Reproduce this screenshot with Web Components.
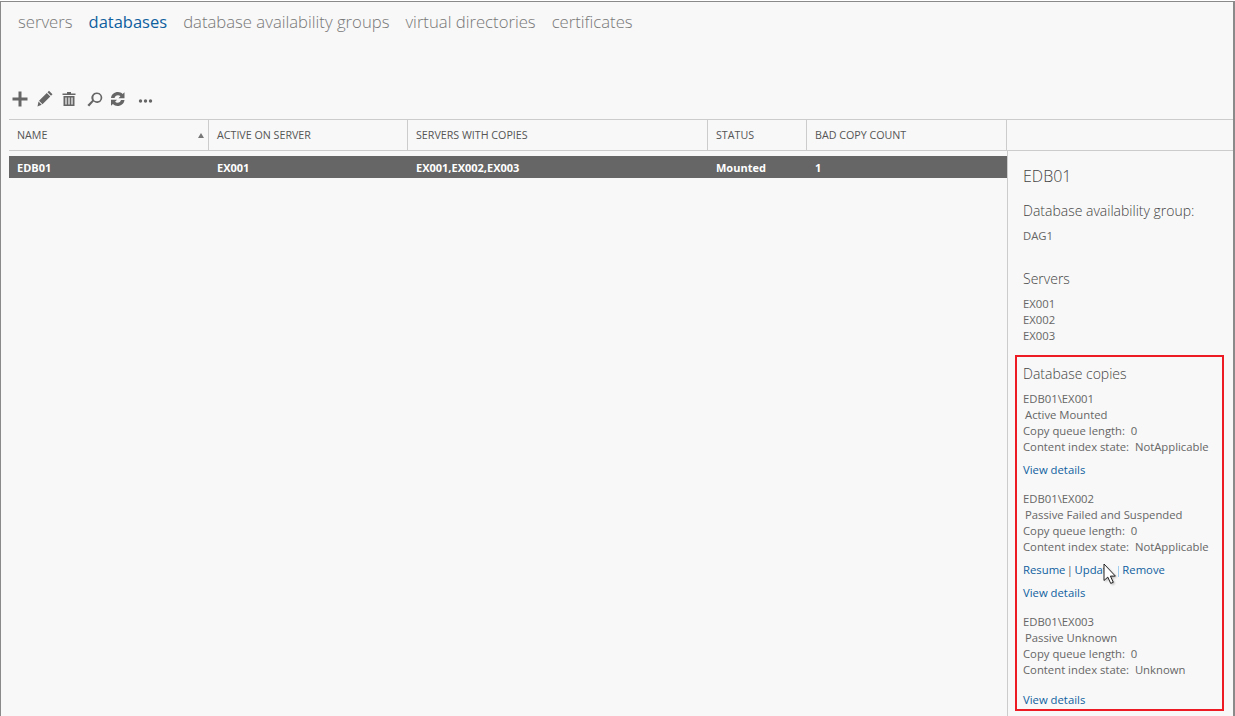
<!DOCTYPE html>
<html>
<head>
<meta charset="utf-8">
<title>databases</title>
<style>
  html, body { margin: 0; height: 100%; overflow: hidden; background: #fff; }
  body { font-family: "Open Sans", "Noto Sans", sans-serif; color: #666; }
</style>
</head>
<body>
<ex-app>
  <ex-tabs slot="tabs" active="databases"></ex-tabs>
  <ex-toolbar slot="toolbar"></ex-toolbar>
  <ex-grid slot="grid"></ex-grid>
  <ex-details slot="details">
    <ex-copy name="EDB01\EX001" state="Active Mounted" index="NotApplicable"></ex-copy>
    <ex-copy name="EDB01\EX002" state="Passive Failed and Suspended" index="NotApplicable" actions></ex-copy>
    <ex-copy name="EDB01\EX003" state="Passive Unknown" index="Unknown" spaced></ex-copy>
  </ex-details>
</ex-app>
<script>
class ExApp extends HTMLElement {
  constructor() {
    super();
    this.attachShadow( {mode: 'open'} ).innerHTML = `
      <style>
        :host {
          box-sizing: border-box;
          display: flex;
          flex-direction: column;
          position: relative;
          width: 1235px;
          height: 715px;
          overflow: hidden;
          border-top: 1px solid #8a8a8a;
          border-left: 1px solid #8a8a8a;
          border-right: 2px solid #8a8a8a;
          margin-top: 1px;
          background: #f8f8f8;
        }
        svg {
          position: absolute;
          left: 1102px;
          top: 561px;
        }
      </style>
      <slot name="tabs"></slot>
      <slot name="toolbar"></slot>
      <slot name="grid"></slot>
      <slot name="details"></slot>
      <svg width="18" height="26" viewBox="0 0 18 26">
        <defs><filter id="soft" x="-30%" y="-30%" width="160%" height="160%"><feGaussianBlur stdDeviation="1"/></filter></defs>
        <rect x="2" y="2" width="13" height="12" fill="#f8f8f8"/>
        <path d="M2.500 2.500v16.500l3.800-3.400 2.900 6.300 2.600-1.100-2.900-6.200h5z" fill="#000" opacity=".3" filter="url(#soft)"/>
        <path d="M1 1v16.500l3.800-3.400 2.900 6.300 2.600-1.100-2.900-6.200h5z" fill="#fff" stroke="#222" stroke-width="1"/>
      </svg>
    `;
  }
}

class ExTabs extends HTMLElement {
  constructor() {
    super();
    const active = this.getAttribute( 'active' );
    const tabs = ['servers', 'databases', 'database availability groups', 'virtual directories', 'certificates'];
    this.attachShadow( {mode: 'open'} ).innerHTML = `
      <style>
        :host {
          display: flex;
          gap: 16px;
          height: 39px;
          padding: 8px 0 0 17px;
          box-sizing: border-box;
          font-size: 16.700px;
          font-weight: 300;
          line-height: 24px;
          color: #777;
        }
        .active { color: #0f5f9f; font-weight: 400; font-size: 16.500px; }
      </style>
      ${tabs.map( tab => `<span class="${tab === active ? 'active' : ''}">${tab}</span>` ).join( '' )}
    `;
  }
}

class ExToolbar extends HTMLElement {
  constructor() {
    super();
    this.attachShadow( {mode: 'open'} ).innerHTML = `
      <style>
        :host {
          display: flex;
          align-items: center;
          height: 78px;
          padding: 37px 0 0 10px;
          box-sizing: border-box;
        }
        svg { display: block; fill: #666; flex: none; }
      </style>
      <svg width="18" height="18" viewBox="0 0 18 18"><path d="M7.500 1.500h3v6h6v3h-6v6h-3v-6h-6v-3h6z"/></svg>
      <svg style="margin-left:8px" width="16" height="18" viewBox="0 0 16 18"><path d="M12 .8l3.500 3.500-1.500 1.500-3.500-3.500zM9.800 3l3.500 3.500-7.800 7.800-3.500-3.500zM1.500 11.600l3.200 3.200-4.200 1.700z"/></svg>
      <svg style="margin-left:9px" width="14" height="18" viewBox="0 0 14 18"><path d="M5 2h4v1.500h4.500v1.500h-13v-1.500h4.500zM1.500 6h11v10h-11zM3.400 7.500v7h1.200v-7zM6.400 7.500v7h1.200v-7zM9.400 7.500v7h1.200v-7z" fill-rule="evenodd"/></svg>
      <svg style="margin-left:11px" width="16" height="18" viewBox="0 0 16 18"><path d="M10 2.500a5.200 5.200 0 1 1-3.400 9.100l-4.400 4.900-1.800-1.600 4.700-4.600a5.200 5.200 0 0 1 4.900-7.800zm0 1.600a3.600 3.600 0 1 0 0 7.200 3.600 3.600 0 0 0 0-7.200z"/></svg>
      <svg style="margin-left:7px" width="16" height="18" viewBox="0 0 16 18"><path d="M8 2c1.800 0 3.400.7 4.600 1.900l1.900-1.700v6h-6l1.900-1.900c-.6-.7-1.500-1.100-2.400-1.100-1.800 0-3.100 1.200-3.500 2.800h-3.500c.3-3.500 3.300-6 7-6zM1 9.800h6l-1.900 1.900c.6.7 1.500 1.100 2.400 1.100 1.800 0 3.200-1.200 3.500-2.800h3.500c-.4 3.500-3.300 6-7 6-1.800 0-3.400-.7-4.600-1.900l-1.900 1.700z"/></svg>
      <svg style="margin-left:12px" width="15" height="18" viewBox="0 0 15 18"><circle cx="2.500" cy="11" r="1.700"/><circle cx="7.500" cy="11" r="1.700"/><circle cx="12.500" cy="11" r="1.700"/></svg>
    `;
  }
}

class ExGrid extends HTMLElement {
  constructor() {
    super();
    this.attachShadow( {mode: 'open'} ).innerHTML = `
      <style>
        :host {
          display: grid;
          grid-template-columns: 200px 199px 300px 99px 200px 1fr;
          margin-left: 8px;
          height: 32px;
          box-sizing: border-box;
          border-top: 1px solid #ccc;
          border-bottom: 1px solid #ccc;
          font-size: 10.700px;
          line-height: 30px;
          color: #555;
        }
        div {
          position: relative;
          padding-left: 8px;
          border-right: 1px solid #ccc;
        }
        div:last-child { border-right: 0; }
        i {
          position: absolute;
          right: 4px;
          top: 13px;
          border: 3.500px solid transparent;
          border-top: 0;
          border-bottom: 5px solid #777;
        }
      </style>
      <div>NAME<i></i></div>
      <div>ACTIVE ON SERVER</div>
      <div>SERVERS WITH COPIES</div>
      <div>STATUS</div>
      <div>BAD COPY COUNT</div>
      <div></div>
    `;
  }
}

class ExDetails extends HTMLElement {
  constructor() {
    super();
    this.attachShadow( {mode: 'open'} ).innerHTML = `
      <style>
        :host {
          display: grid;
          grid-template-columns: 998px 226px;
          margin-left: 8px;
          flex: 1;
          min-height: 0;
          font-size: 11.300px;
          line-height: 16px;
          color: #666;
        }
        .list { padding-top: 5px; }
        .row {
          display: grid;
          grid-template-columns: 200px 199px 300px 99px 200px;
          height: 22px;
          background: #666;
          color: #fff;
          font-size: 11px;
          font-weight: 700;
          line-height: 23px;
        }
        .row span { padding-left: 8px; }
        aside {
          border-left: 1px solid #ccc;
          padding: 14px 0 0 7px;
        }
        .pad { padding-left: 8px; }
        h2, h3 { margin: 0; font-weight: 300; color: #444; }
        h2 { font-size: 16px; line-height: 22px; }
        h3 { font-size: 14px; line-height: 20px; }
        .group { margin-top: 14px; }
        .value { margin-top: 7px; }
        .servers { margin-top: 25px; }
        .servers div { margin-top: 7px; }
        section {
          box-sizing: border-box;
          width: 209px;
          height: 356px;
          margin-top: 11px;
          padding: 7px 0 0 6px;
          border: 2px solid #ed1c24;
        }
        h3.copies { margin-bottom: 7px; }
      </style>
      <div class="list">
        <div class="row">
          <span>EDB01</span><span>EX001</span><span>EX001,EX002,EX003</span><span>Mounted</span><span>1</span>
        </div>
      </div>
      <aside>
        <div class="pad">
          <h2>EDB01</h2>
          <h3 class="group">Database availability group:</h3>
          <div class="value">DAG1</div>
          <div class="servers">
            <h3>Servers</h3>
            <div>EX001<br>EX002<br>EX003</div>
          </div>
        </div>
        <section>
          <h3 class="copies">Database copies</h3>
          <slot></slot>
        </section>
      </aside>
    `;
  }
}

class ExCopy extends HTMLElement {
  constructor() {
    super();
    const actions = this.hasAttribute( 'actions' )
      ? `<div class="link actions"><a>Resume</a> | <a>Update</a> | <a>Remove</a></div>` : '';
    this.attachShadow( {mode: 'open'} ).innerHTML = `
      <style>
        :host { display: block; margin-bottom: 13px; }
        :host( [spaced] ) .link { margin-top: 14px; }
        .state { padding-left: 2px; }
        .link { margin-top: 7px; }
        .actions { word-spacing: -1.500px; }
        a { color: #0f5f9f; }
      </style>
      <div>${this.getAttribute( 'name' )}</div>
      <div class="state">${this.getAttribute( 'state' )}</div>
      <div>Copy queue length:&nbsp; 0</div>
      <div>Content index state:&nbsp; ${this.getAttribute( 'index' )}</div>
      ${actions}
      <div class="link"><a>View details</a></div>
    `;
  }
}

customElements.define( 'ex-app', ExApp );
customElements.define( 'ex-tabs', ExTabs );
customElements.define( 'ex-toolbar', ExToolbar );
customElements.define( 'ex-grid', ExGrid );
customElements.define( 'ex-details', ExDetails );
customElements.define( 'ex-copy', ExCopy );
</script>
</body>
</html>
